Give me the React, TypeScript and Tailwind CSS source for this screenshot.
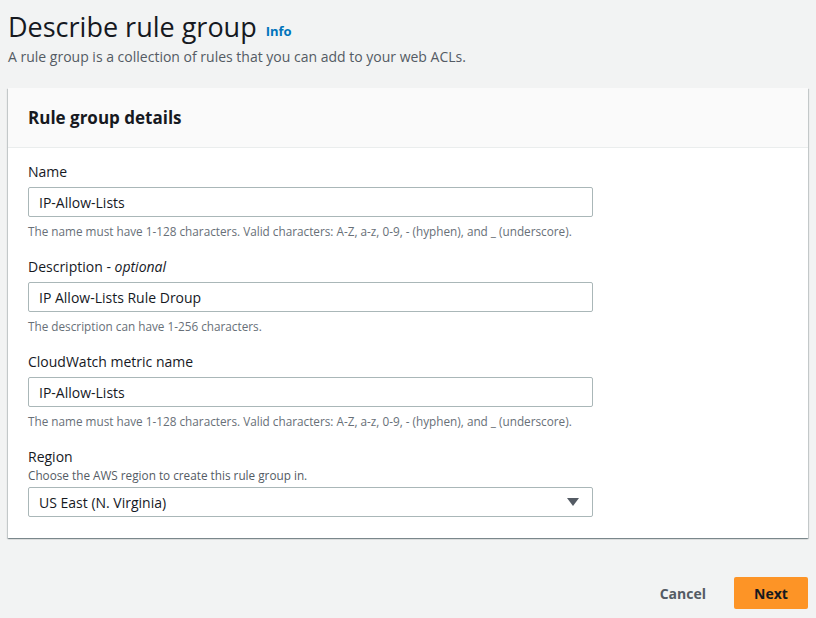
import { ReactNode } from 'react';

const font = { fontFamily: '"Open Sans", "Noto Sans", Arial, sans-serif' };

function Field({ label, children, hint, desc }: { label: ReactNode; children: ReactNode; hint?: string; desc?: string }) {
  return (
    <div className="flex flex-col">
      <div className="text-[14px] leading-[20px] text-[#16191f]">{label}</div>
      {desc && <div className="text-[11.75px] leading-[16px] text-[#545b64]">{desc}</div>}
      <div className={desc ? 'mt-[4px]' : 'mt-[5px]'}>{children}</div>
      {hint && <div className="mt-[6px] text-[11.75px] leading-[16px] text-[#687078]">{hint}</div>}
    </div>
  );
}

function TextInput({ value }: { value: string }) {
  return (
    <div className="w-[565px] h-[30px] border border-[#aab7b8] rounded-[2px] bg-white flex items-center px-[10px] text-[14px] text-[#16191f]">
      {value}
    </div>
  );
}

export default function App() {
  const nameHint = 'The name must have 1-128 characters. Valid characters: A-Z, a-z, 0-9, - (hyphen), and _ (underscore).';
  return (
    <div className="w-[816px] h-[618px] bg-[#f2f3f3] overflow-hidden px-[8px]" style={font}>
      <div className="pt-[7px] flex items-end gap-[9px]">
        <h1 className="text-[27px] leading-[40px] text-[#16191f]">Describe rule group</h1>
        <span className="text-[13px] font-bold text-[#0073bb] mb-[6px]">Info</span>
      </div>
      <p className="mt-[0px] text-[14px] leading-[20px] text-[#545b64]">
        A rule group is a collection of rules that you can add to your web ACLs.
      </p>

      <div className="mt-[21px] bg-white shadow-[0_1px_1px_0_rgba(0,28,36,0.3),1px_1px_1px_0_rgba(0,28,36,0.15),-1px_1px_1px_0_rgba(0,28,36,0.15)]">
        <div className="h-[60px] bg-[#fafafa] border-b border-[#eaeded] flex items-center px-[20px]">
          <h2 className="text-[17px] font-bold text-[#16191f]">Rule group details</h2>
        </div>
        <div className="px-[20px] pt-[14px] pb-[21px] flex flex-col gap-[18px]">
          <Field label="Name" hint={nameHint}>
            <TextInput value="IP-Allow-Lists" />
          </Field>
          <Field label={<>Description - <i>optional</i></>} hint="The description can have 1-256 characters.">
            <TextInput value="IP Allow-Lists Rule Droup" />
          </Field>
          <Field label="CloudWatch metric name" hint={nameHint}>
            <TextInput value="IP-Allow-Lists" />
          </Field>
          <Field label="Region" desc="Choose the AWS region to create this rule group in.">
            <div className="w-[565px] h-[30px] border border-[#aab7b8] rounded-[2px] bg-white flex items-center justify-between pl-[10px] pr-[13px] text-[14px] text-[#16191f]">
              <span>US East (N. Virginia)</span>
              <svg width="12" height="8" viewBox="0 0 12 8">
                <path d="M0 0h12L6 8z" fill="#545b64" />
              </svg>
            </div>
          </Field>
        </div>
      </div>

      <div className="mt-[39px] flex items-center justify-end gap-[28px]">
        <span className="text-[14px] font-bold text-[#545b64]">Cancel</span>
        <button className="w-[74px] h-[32px] bg-[#fd9426] rounded-[2px] text-[14px] font-bold text-[#16191f]">Next</button>
      </div>
    </div>
  );
}
